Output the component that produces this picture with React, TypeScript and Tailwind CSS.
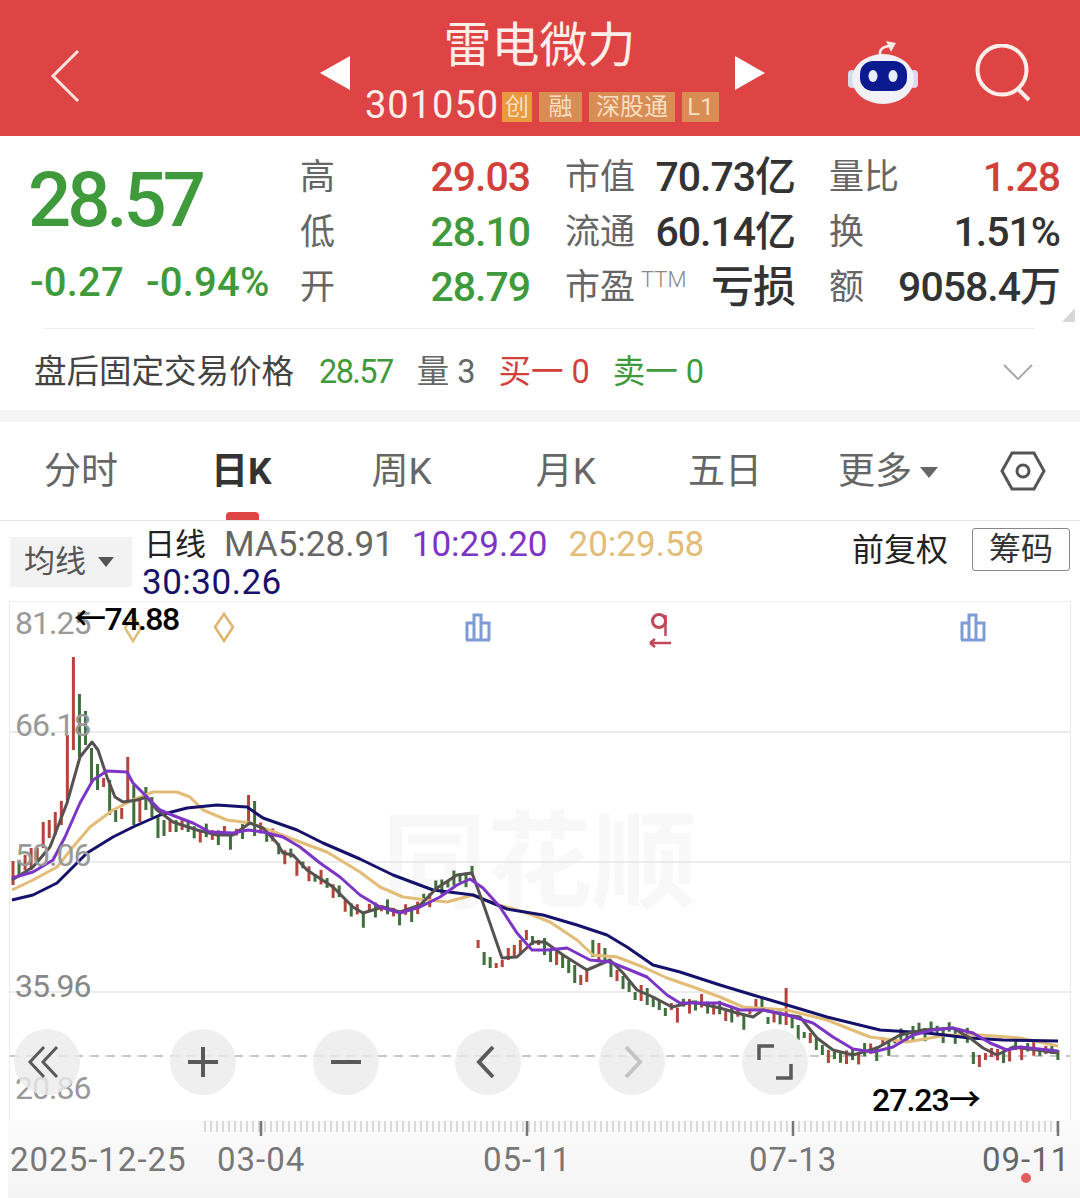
import * as React from "react";

type Pt = [number, number];

const ma5: Pt[] = [[12,880],[33,867],[50,847],[67,803],[80,757],[92,742],[98,750],[107,777],[115,797],[123,802],[137,800],[147,797],[157,810],[173,822],[197,830],[217,835],[233,835],[250,823],[263,828],[277,843],[283,853],[293,855],[307,870],[333,887],[353,907],[363,913],[383,907],[400,912],[420,905],[437,888],[457,875],[472,873],[483,903],[502,958],[517,957],[533,942],[545,942],[563,955],[587,970],[610,960],[623,973],[637,990],[653,997],[672,1007],[693,1002],[720,1008],[737,1013],[753,1017],[763,1010],[787,1015],[800,1017],[817,1038],[833,1050],[853,1055],[877,1048],[900,1035],[923,1030],[953,1028],[970,1038],[983,1048],[997,1055],[1013,1047],[1037,1050],[1058,1053]];
const ma10: Pt[] = [[12,878],[33,872],[53,860],[65,837],[80,803],[93,780],[107,771],[127,772],[133,783],[147,797],[160,810],[177,817],[193,823],[210,832],[233,833],[248,830],[263,832],[283,837],[300,847],[320,863],[340,877],[360,895],[380,907],[400,913],[420,907],[440,897],[457,885],[470,879],[483,888],[500,907],[517,933],[532,950],[547,950],[567,948],[590,960],[610,962],[630,970],[647,977],[667,995],[680,1003],[720,1003],[740,1010],[763,1010],[787,1015],[813,1023],[833,1037],[853,1049],[873,1052],[893,1047],[913,1035],[933,1030],[953,1028],[973,1033],[990,1043],[1007,1050],[1020,1047],[1058,1051]];
const ma20: Pt[] = [[12,890],[33,880],[57,867],[73,847],[90,827],[113,810],[133,800],[153,792],[177,792],[190,797],[203,810],[227,820],[250,823],[277,833],[300,842],[327,852],[360,872],[380,887],[403,897],[427,900],[447,902],[473,895],[493,903],[527,913],[550,922],[577,940],[593,955],[617,957],[643,967],[667,978],[693,987],[720,997],[743,1007],[787,1010],[827,1020],[870,1037],[907,1042],[947,1035],[980,1035],[1020,1038],[1058,1046]];
const ma30: Pt[] = [[12,900],[33,895],[57,883],[70,870],[87,853],[113,837],[133,827],[160,815],[187,808],[217,805],[247,807],[263,818],[297,830],[323,843],[360,859],[393,875],[433,890],[473,895],[507,909],[543,915],[577,925],[607,935],[627,947],[653,965],[680,972],[720,985],[753,995],[787,1005],[827,1017],[880,1030],[927,1033],[970,1038],[1003,1040],[1058,1041]];

const RED = "#b5443c";
const GREEN = "#3f6f3a";

// hand-read candles: [index, top, bottom, red?]
const fixed: Record<number, [number, number, boolean]> = {
  0: [861,885,true],1: [860,875,false],2: [855,870,true],3: [848,870,true],4: [848,862,true],5: [822,848,true],6: [820,838,true],7: [812,835,true],8: [801,825,true],9: [735,800,true],10: [657,750,true],11: [694,757,false],12: [711,745,false],13: [748,782,false],14: [764,790,false],15: [778,787,true],16: [780,815,false],17: [810,822,false],18: [808,819,true],19: [757,800,true],20: [785,825,false],21: [797,822,true],22: [787,810,false],23: [797,817,false],24: [815,838,false],25: [820,836,false],26: [820,832,true],27: [820,832,false],28: [820,830,true],29: [820,832,false],
  39: [795,822,true],40: [801,836,false],
  77: [940,948,true],78: [952,965,false],79: [957,968,false],80: [963,968,true],81: [960,967,true],82: [948,960,true],83: [945,958,true],84: [940,955,true],85: [930,940,true],86: [936,945,false],87: [940,945,true],88: [938,955,false],89: [950,962,false],90: [950,965,true],91: [955,968,false],92: [960,973,false],93: [965,983,false],94: [975,985,true],95: [970,982,true],96: [940,957,false],97: [943,960,true],98: [948,962,false],99: [963,977,false],100: [970,981,true],101: [976,989,false],102: [982,992,false],103: [992,1000,false],104: [985,1001,true],105: [988,1005,false],106: [998,1007,false],107: [1000,1010,false],108: [1008,1016,false],109: [1003,1010,true],
  123: [999,1010,true],124: [998,1008,false],125: [1017,1024,false],128: [988,1025,true],130: [1025,1040,false],131: [1032,1038,false],132: [1033,1043,true],133: [1038,1050,false],134: [1045,1055,false],135: [1050,1063,true],136: [1052,1059,false],
  159: [1052,1064,false],160: [1055,1067,true],161: [1053,1060,true],162: [1048,1057,true],171: [1046,1054,true],172: [1046,1054,false],173: [1050,1060,false],
};

function lerp(pts: Pt[], x: number) {
  for (let i = 1; i < pts.length; i++) {
    if (x <= pts[i][0]) {
      const [x0, y0] = pts[i - 1];
      const [x1, y1] = pts[i];
      return y0 + ((y1 - y0) * (x - x0)) / (x1 - x0);
    }
  }
  return pts[pts.length - 1][1];
}

const candles = Array.from({ length: 174 }, (_, i) => {
  const x = 13 + i * 6.04;
  const f = fixed[i];
  if (f) return { x, top: f[0], bottom: f[1], red: f[2] };
  const base = lerp(ma5, x);
  const wave = Math.sin(i * 2.3) * 4 + Math.sin(i * 0.7) * 2;
  const len = 6 + Math.abs(Math.sin(i * 1.7)) * 9;
  const top = base + wave - 4;
  return { x, top, bottom: top + len, red: Math.sin(i * 3.1) > 0.25 };
});

const toPoints = (pts: Pt[]) => pts.map((p) => p.join(",")).join(" ");

function Chart() {
  return (
    <svg className="block w-[1060px] h-[518px]" viewBox="10 602 1060 518">
      {[732, 862, 992].map((y) => (
        <line key={y} x1="10" x2="1070" y1={y} y2={y} stroke="#e6e6e6" strokeWidth="1.5" />
      ))}
      <line x1="10" x2="1070" y1="1056" y2="1056" stroke="#b5b5b5" strokeWidth="1.5" strokeDasharray="9 7" />
      {candles.map((c, i) => (
        <rect key={i} x={c.x - 1.5} y={c.top} width="3" height={c.bottom - c.top} fill={c.red ? RED : GREEN} />
      ))}
      <polyline points={toPoints(ma20)} fill="none" stroke="#e3bd78" strokeWidth="3" strokeLinejoin="round" />
      <polyline points={toPoints(ma30)} fill="none" stroke="#16126b" strokeWidth="3" strokeLinejoin="round" />
      <polyline points={toPoints(ma5)} fill="none" stroke="#55524f" strokeWidth="3" strokeLinejoin="round" />
      <polyline points={toPoints(ma10)} fill="none" stroke="#7c35c4" strokeWidth="3" strokeLinejoin="round" />

      {/* markers along the top */}
      <path d="M133 616l8 12-8 13-8-13z" fill="none" stroke="#e0bd7e" strokeWidth="2.5" />
      <path d="M224 614l9 13-9 14-9-14z" fill="none" stroke="#e0b56c" strokeWidth="2.5" />
      {[478, 973].map((x) => (
        <path key={x} d={`M${x - 11} 640v-17h7v17M${x - 4} 640v-25h7v25M${x + 3} 640v-17h8v17M${x - 12} 640h24`} fill="none" stroke="#7f9bd6" strokeWidth="3" />
      ))}
      <circle cx="659" cy="621" r="6.5" fill="none" stroke="#c2475a" strokeWidth="3" />
      <path d="M665.5 615v21M650 643h21M650 643l5-4M650 643l5 4" fill="none" stroke="#c2475a" strokeWidth="2.5" />
    </svg>
  );
}

function CircleButton({ children, left }: { children: React.ReactNode; left: string }) {
  return (
    <div className={`absolute top-[427px] w-[66px] h-[66px] rounded-full bg-[#ebebeb]/80 flex items-center justify-center ${left}`}>
      <svg viewBox="0 0 66 66" className="w-[66px] h-[66px]" fill="none" stroke="#5a5a5a" strokeWidth="3">
        {children}
      </svg>
    </div>
  );
}

function Robot() {
  return (
    <svg viewBox="0 0 70 64" className="w-[70px] h-[64px]">
      <path d="M32 16c-1-6 2-9 9-10" fill="none" stroke="#fbe9e6" strokeWidth="2.5" />
      <path d="M38 1l10 2-5 9z" fill="#fbe9e6" />
      <rect x="0" y="30" width="8" height="18" rx="4" fill="#d8dbe8" />
      <rect x="62" y="30" width="8" height="18" rx="4" fill="#d8dbe8" />
      <ellipse cx="35" cy="39" rx="31" ry="25" fill="#f2f2f6" />
      <rect x="12" y="21" width="47" height="30" rx="13" fill="#0b1a8e" />
      <ellipse cx="25" cy="36" rx="4.5" ry="6" fill="#e8eeff" />
      <ellipse cx="45" cy="36" rx="4.5" ry="6" fill="#e8eeff" />
    </svg>
  );
}

const stats = [
  [
    { label: "高", value: "29.03", color: "text-[#d2403a]" },
    { label: "低", value: "28.10", color: "text-[#3f9a3c]" },
    { label: "开", value: "28.79", color: "text-[#3f9a3c]" },
  ],
  [
    { label: "市值", value: "70.73亿", color: "text-[#333]" },
    { label: "流通", value: "60.14亿", color: "text-[#333]" },
    { label: "市盈", value: "亏损", color: "text-[#333]", ttm: true },
  ],
  [
    { label: "量比", value: "1.28", color: "text-[#d2403a]" },
    { label: "换", value: "1.51%", color: "text-[#333]" },
    { label: "额", value: "9058.4万", color: "text-[#333]" },
  ],
];

const tabs = [
  { label: "分时", className: "ml-[44px]" },
  { label: "日K", className: "ml-[93px] font-bold text-[#333]" },
  { label: "周K", className: "ml-[100px]" },
  { label: "月K", className: "ml-[104px]" },
  { label: "五日", className: "ml-[92px]" },
  { label: "更多", className: "ml-[76px]" },
];

export default function App() {
  return (
    <div className="relative w-[1080px] h-[1198px] overflow-hidden bg-white font-['Roboto','Noto_Sans_CJK_SC',sans-serif]">
      {/* Header */}
      <header className="flex items-center h-[136px] bg-[#de4444] pl-[50px] text-[#fdeeea]">
        <svg viewBox="0 0 30 54" className="w-[30px] h-[54px] mt-[15px]" fill="none" stroke="#fbe3df" strokeWidth="3">
          <path d="M28 2L3 27l25 25" />
        </svg>
        <svg viewBox="0 0 30 34" className="ml-[240px] w-[30px] h-[34px] mt-[9px]" fill="#fff">
          <path d="M30 0v34L0 17z" />
        </svg>
        <div className="w-[385px] flex flex-col items-center">
          <div className="h-[64px] pt-[5px] pr-[6px] text-[48px] leading-[52px] whitespace-nowrap">雷电微力</div>
          <div className="flex items-start h-[32px] mt-[10px] pl-[15px] w-full">
            <span className="text-[38px] leading-[32px] tracking-[1px] w-[137px]">301050</span>
            <span className="mt-[3px] w-[30px] h-[30px] bg-[#ea9a3e] text-[#f6dfc0] text-[24px] leading-[30px] text-center overflow-hidden">创</span>
            <span className="mt-[3px] ml-[7px] w-[43px] h-[30px] bg-[#d98d55] text-[#f6dfc0] text-[24px] leading-[30px] text-center">融</span>
            <span className="mt-[3px] ml-[7px] w-[86px] h-[30px] bg-[#d98d55] text-[#f6dfc0] text-[24px] leading-[30px] text-center whitespace-nowrap">深股通</span>
            <span className="mt-[3px] ml-[7px] w-[37px] h-[30px] bg-[#d98d55] text-[#f6dfc0] text-[24px] leading-[30px] text-center">L1</span>
          </div>
        </div>
        <svg viewBox="0 0 30 34" className="w-[30px] h-[34px] mt-[9px]" fill="#fff">
          <path d="M0 0v34l30-17z" />
        </svg>
        <div className="ml-[83px] mt-[8px]">
          <Robot />
        </div>
        <svg viewBox="0 0 58 58" className="ml-[57px] w-[58px] h-[58px] mt-[9px]" fill="none" stroke="#fdeeea" strokeWidth="4">
          <circle cx="27" cy="26" r="24.5" />
          <path d="M43 45l11 11" />
        </svg>
      </header>

      {/* Quote */}
      <section className="relative pt-[14px]">
        <div className="flex h-[165px]">
          <div className="w-[300px] pl-[28px] text-[#3f9a3c]">
            <div className="h-[100px] text-[76px] leading-[100px] font-medium tracking-[-4px]">28.57</div>
            <div className="flex h-[55px] mt-[5px] pl-[2px] text-[40px] leading-[55px] font-medium tracking-[0.2px]">
              <span className="w-[116px]">-0.27</span>
              <span>-0.94%</span>
            </div>
          </div>
          <div className="flex">
            {stats.map((col, i) => (
              <div key={i} className={i === 0 ? "w-[230px]" : i === 1 ? "ml-[35px] w-[230px]" : "ml-[34px] w-[231px]"}>
                {col.map((s) => (
                  <div key={s.label} className="flex items-center justify-between h-[55px]">
                    <span className="flex items-start text-[35px] leading-[55px] text-[#666] whitespace-nowrap">
                      {s.label}
                      {s.ttm && <span className="ml-[6px] text-[22px] leading-[40px] font-light text-[#888]">TTM</span>}
                    </span>
                    <span className={`${s.ttm ? "text-[43px]" : "text-[41px]"} leading-[55px] font-medium tracking-[-1px] whitespace-nowrap ${s.color}`}>
                      {s.value}
                    </span>
                  </div>
                ))}
              </div>
            ))}
          </div>
        </div>
        <div className="absolute left-[1062px] top-[172px] w-0 h-0 border-l-[13px] border-b-[14px] border-l-transparent border-b-[#d8d8d8]" />
        <div className="mt-[13px] ml-[44px] w-[991px] h-[1px] bg-[#ececec]" />
        <div className="flex items-center h-[81px] pt-[4px] pl-[34px] text-[32.5px] leading-[40px] whitespace-nowrap">
          <span className="text-[#444]">盘后固定交易价格</span>
          <span className="ml-[25px] text-[#3f9a3c] tracking-[-1.6px]">28.57</span>
          <span className="ml-[24px] text-[#666]">量 3</span>
          <span className="ml-[23px] text-[#d2403a]">买一 0</span>
          <span className="ml-[23px] text-[#3f9a3c]">卖一 0</span>
          <svg viewBox="0 0 30 16" className="ml-[299px] w-[30px] h-[16px]" fill="none" stroke="#aaa" strokeWidth="2">
            <path d="M1 1l14 14L29 1" />
          </svg>
        </div>
      </section>

      <div className="h-[12px] bg-[#f5f5f5]" />

      {/* Period tabs */}
      <nav className="relative flex items-center h-[99px] pt-[2px] border-b border-[#e6e6e6] text-[37px] text-[#666] whitespace-nowrap">
        {tabs.map((t) => (
          <span key={t.label} className={t.className}>{t.label}</span>
        ))}
        <span className="ml-[8px] w-0 h-0 border-x-[9px] border-t-[11px] border-x-transparent border-t-[#666]" />
        <svg viewBox="0 0 46 40" className="ml-[62px] -mt-[3px] w-[46px] h-[40px]" fill="none" stroke="#555" strokeWidth="3">
          <path d="M12 2h22l10 18-10 18H12L2 20z" />
          <circle cx="23" cy="20" r="6" />
        </svg>
        <span className="absolute left-[226px] top-[90px] w-[33px] h-[8px] rounded-t-[4px] bg-[#de4444]" />
      </nav>

      {/* Moving average legend */}
      <div className="flex h-[81px] whitespace-nowrap">
        <div className="ml-[10px] mt-[16px] flex items-center w-[122px] h-[50px] pl-[14px] bg-[#f2f2f2] text-[31px] text-[#555]">
          均线
          <span className="ml-[12px] w-0 h-0 border-x-[8px] border-t-[10px] border-x-transparent border-t-[#555]" />
        </div>
        <div className="ml-[10px] pt-[5px] text-[35px] leading-[38px] flex-1">
          <div className="flex">
            <span className="ml-[2px] text-[31px] text-[#222]">日线</span>
            <span className="ml-[18px] text-[#666]">MA5:28.91</span>
            <span className="ml-[18px] text-[#7c35c4]">10:29.20</span>
            <span className="ml-[21px] text-[#e3bd78]">20:29.58</span>
          </div>
          <div className="tracking-[0.5px] text-[#16126b]">30:30.26</div>
        </div>
        <span className="mt-[9px] text-[32px] leading-[40px] text-[#222]">前复权</span>
        <span className="ml-[24px] mr-[10px] mt-[7px] w-[98px] h-[43px] border border-[#888] rounded-[3px] text-[32px] leading-[40px] text-center text-[#333]">筹码</span>
      </div>

      {/* K-line chart */}
      <div className="relative ml-[10px] w-[1060px] h-[518px] outline outline-[#ececec]">
        <div className="absolute left-[372px] top-[207px] text-[105px] leading-[110px] font-bold text-[#f8f8f8] whitespace-nowrap">同花顺</div>
        <div className="absolute inset-0">
          <Chart />
        </div>
        <span className="absolute left-[5px] top-[2px] text-[32px] leading-[38px] tracking-[-1px] text-[#999]">81.25</span>
        <span className="absolute left-[5px] top-[104px] text-[32px] leading-[38px] tracking-[-1px] text-[#999]">66.18</span>
        <span className="absolute left-[5px] top-[234px] text-[32px] leading-[38px] tracking-[-1px] text-[#999]">50.06</span>
        <span className="absolute left-[5px] top-[365px] text-[32px] leading-[38px] tracking-[-1px] text-[#888]">35.96</span>
        <span className="absolute left-[5px] top-[467px] text-[32px] leading-[38px] tracking-[-1px] text-[#999]">20.86</span>
        <span className="absolute left-[64px] top-[-2px] text-[32px] leading-[38px] font-medium tracking-[-1.5px] text-black whitespace-nowrap">←74.88</span>
        <span className="absolute left-[862px] top-[479px] text-[32px] leading-[38px] font-medium tracking-[-1px] text-black whitespace-nowrap">27.23→</span>
        <CircleButton left="left-[4px]">
          <path d="M30 18L16 33l14 15M43 18L29 33l14 15" />
        </CircleButton>
        <CircleButton left="left-[160px]">
          <path d="M18 33h30M33 18v30" strokeWidth="4" />
        </CircleButton>
        <CircleButton left="left-[303px]">
          <path d="M18 33h30" strokeWidth="4" />
        </CircleButton>
        <CircleButton left="left-[445px]">
          <path d="M38 18L24 33l14 15" strokeWidth="4" />
        </CircleButton>
        <CircleButton left="left-[589px]">
          <path d="M27 18l14 15-14 15" stroke="#c4c4c4" strokeWidth="4" />
        </CircleButton>
        <CircleButton left="left-[732px]">
          <path d="M17 31V17h15M49 35v14H34" strokeWidth="3.5" />
        </CircleButton>
      </div>

      {/* Time axis */}
      <div className="relative ml-[8px] h-[78px] bg-linear-to-b from-[#fbfbfb] to-[#f4f4f4]">
        <svg viewBox="8 1120 1072 24" className="block w-[1072px] h-[24px]">
          {Array.from({ length: 143 }, (_, i) => (
            <line key={i} x1={205 + i * 6} x2={205 + i * 6} y1="1121" y2="1132" stroke="#cfcfcf" strokeWidth="1.5" />
          ))}
          {[261, 527, 793, 1058].map((x) => (
            <line key={x} x1={x} x2={x} y1="1121" y2="1136" stroke="#777" strokeWidth="2.5" />
          ))}
        </svg>
        <div className="flex text-[33px] leading-[32px] tracking-[1px] text-[#777] whitespace-nowrap">
          <span className="ml-[2px] w-[176px]">2025-12-25</span>
          <span className="ml-[31px] w-[87px]">03-04</span>
          <span className="ml-[179px] w-[87px]">05-11</span>
          <span className="ml-[179px] w-[87px]">07-13</span>
          <span className="ml-[146px] text-[#666]">09-11</span>
        </div>
        <span className="absolute left-[1013px] top-[53px] w-[10px] h-[10px] rounded-full bg-[#e25d5d]" />
      </div>
    </div>
  );
}
